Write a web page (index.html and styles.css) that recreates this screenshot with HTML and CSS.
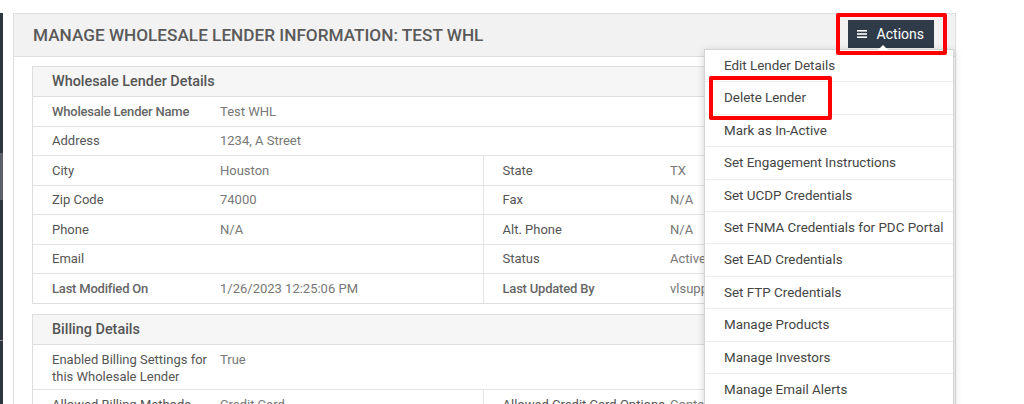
FILE: index.html
```html
<!DOCTYPE html>
<html lang="en">

<head>
    <meta charset="UTF-8">
    <meta name="viewport" content="width=device-width, initial-scale=1.0">
    <title>Manage Wholesale Lender</title>
    <link rel="stylesheet" href="styles.css">
</head>

<body>
    <div class="layout">
        <div class="sidebar">
            <div class="sidebar-active"></div>
            <div class="sidebar-line"></div>
        </div>

        <div class="content">
            <div class="panel">
                <div class="panel-header">
                    <h1 class="panel-title">Manage Wholesale Lender Information: Test WHL</h1>

                    <div class="actions">
                        <span class="highlight highlight-actions"></span>
                        <button class="actions-button">
                            <svg class="menu-icon" width="10" height="8" viewBox="0 0 10 8">
                                <rect x="0" y="0" width="10" height="1.6" fill="#fff" />
                                <rect x="0" y="3.2" width="10" height="1.6" fill="#fff" />
                                <rect x="0" y="6.4" width="10" height="1.6" fill="#fff" />
                            </svg>
                            Actions
                        </button>

                        <ul class="dropdown">
                            <li><a href="#">Edit Lender Details</a></li>
                            <li><a href="#">Delete Lender</a><span class="highlight highlight-item"></span></li>
                            <li><a href="#">Mark as In-Active</a></li>
                            <li><a href="#">Set Engagement Instructions</a></li>
                            <li><a href="#">Set UCDP Credentials</a></li>
                            <li><a href="#">Set FNMA Credentials for PDC Portal</a></li>
                            <li><a href="#">Set EAD Credentials</a></li>
                            <li><a href="#">Set FTP Credentials</a></li>
                            <li><a href="#">Manage Products</a></li>
                            <li><a href="#">Manage Investors</a></li>
                            <li><a href="#">Manage Email Alerts</a></li>
                        </ul>
                    </div>
                </div>

                <div class="panel-body">
                    <div class="section">
                        <div class="section-header">Wholesale Lender Details</div>
                        <table class="detail-table">
                            <colgroup>
                                <col class="col-label">
                                <col class="col-value">
                                <col class="col-label">
                                <col class="col-value-last">
                            </colgroup>
                            <tr>
                                <td class="label strong">Wholesale Lender Name</td>
                                <td class="value" colspan="3">Test WHL</td>
                            </tr>
                            <tr>
                                <td class="label">Address</td>
                                <td class="value" colspan="3">1234, A Street</td>
                            </tr>
                            <tr>
                                <td class="label">City</td>
                                <td class="value">Houston</td>
                                <td class="label split">State</td>
                                <td class="value">TX</td>
                            </tr>
                            <tr>
                                <td class="label">Zip Code</td>
                                <td class="value">74000</td>
                                <td class="label split">Fax</td>
                                <td class="value">N/A</td>
                            </tr>
                            <tr>
                                <td class="label">Phone</td>
                                <td class="value">N/A</td>
                                <td class="label split">Alt. Phone</td>
                                <td class="value">N/A</td>
                            </tr>
                            <tr>
                                <td class="label">Email</td>
                                <td class="value"></td>
                                <td class="label split">Status</td>
                                <td class="value">Active</td>
                            </tr>
                            <tr>
                                <td class="label strong">Last Modified On</td>
                                <td class="value">1/26/2023 12:25:06 PM</td>
                                <td class="label split strong">Last Updated By</td>
                                <td class="value">vlsupport</td>
                            </tr>
                        </table>
                    </div>

                    <div class="section">
                        <div class="section-header">Billing Details</div>
                        <table class="detail-table">
                            <colgroup>
                                <col class="col-label">
                                <col class="col-value">
                                <col class="col-label">
                                <col class="col-value-last">
                            </colgroup>
                            <tr class="tall">
                                <td class="label">Enabled Billing Settings for<br>this Wholesale Lender</td>
                                <td class="value" colspan="3">True</td>
                            </tr>
                            <tr>
                                <td class="label">Allowed Billing Methods</td>
                                <td class="value">Credit Card</td>
                                <td class="label split">Allowed Credit Card Options</td>
                                <td class="value">Contact</td>
                            </tr>
                        </table>
                    </div>
                </div>
            </div>
        </div>
    </div>
</body>

</html>
```

FILE: styles.css
```css
body {
    font-family: Roboto, "Liberation Sans", Arial, sans-serif;
    margin: 0;
    background-color: #fff;
    color: #555;
}

.layout {
    display: flex;
    height: 404px;
    overflow: hidden;
}

.sidebar {
    width: 3px;
    margin-top: 13px;
    background-color: #2e3640;
    display: flex;
    flex-direction: column;
}

.sidebar-active {
    height: 47px;
    margin-top: 140px;
    background-color: #5a6169;
}

.sidebar-line {
    height: 1px;
    margin-top: 140px;
    background-color: #8a9097;
}

.content {
    padding: 13px 0 0 10px;
}

.panel {
    width: 941px;
    border: 1px solid #ddd;
    background-color: #fff;
}

.panel-header {
    display: flex;
    align-items: center;
    justify-content: space-between;
    height: 42px;
    padding: 0 21px 0 19px;
    background-color: #f2f2f2;
    border-bottom: 1px solid #ddd;
    position: relative;
}

.panel-title {
    margin: 0;
    font-size: 17.2px;
    font-weight: 500;
    text-transform: uppercase;
    color: #5a5a5a;
}

.actions {
    position: relative;
    margin-top: -3px;
}

.actions-button {
    display: flex;
    align-items: center;
    gap: 10px;
    height: 28px;
    padding: 0 10px 0 9px;
    border: none;
    background-color: #2f3b49;
    color: #fff;
    font-family: inherit;
    font-size: 14px;
    cursor: pointer;
}

.menu-icon {
    display: block;
}

.highlight {
    position: absolute;
    border: 4px solid #f00;
    border-radius: 2px;
    pointer-events: none;
    z-index: 3;
}

.highlight-actions {
    left: -12px;
    right: -13px;
    top: -7px;
    bottom: -7px;
}

.dropdown {
    position: absolute;
    top: 29.5px;
    right: -20px;
    width: 248px;
    margin: 0;
    padding: 0;
    list-style: none;
    background-color: #fff;
    border: 1px solid #d4d4d4;
    box-shadow: 0 2px 8px rgba(0, 0, 0, 0.18);
    z-index: 2;
}

.dropdown::before {
    content: "";
    position: absolute;
    top: -5px;
    right: 65px;
    border-left: 5px solid transparent;
    border-right: 5px solid transparent;
    border-bottom: 5px solid #fff;
}

.dropdown li {
    position: relative;
    height: 32.4px;
    box-sizing: border-box;
    border-bottom: 1px solid #ededed;
}

.dropdown li:last-child {
    border-bottom: none;
}

.dropdown a {
    display: block;
    padding: 0 19px;
    line-height: 32px;
    font-size: 13.4px;
    color: #444;
    text-decoration: none;
    white-space: nowrap;
}

.highlight-item {
    left: 4px;
    top: -6px;
    width: 123px;
    height: 44px;
    box-sizing: border-box;
}

.panel-body {
    padding: 9px 19px 0 18px;
}

.section {
    border: 1px solid #ddd;
    margin-bottom: 10px;
}

.section-header {
    height: 29px;
    line-height: 29px;
    padding: 0 19px;
    background-color: #f6f6f6;
    border-bottom: 1px solid #ddd;
    font-size: 14.4px;
    font-weight: 500;
    color: #555;
}

.detail-table {
    width: 100%;
    border-collapse: collapse;
    table-layout: fixed;
    font-size: 13px;
}

.col-label {
    width: 179px;
}

.col-value {
    width: 271px;
}

.col-value-last {
    width: auto;
}

.detail-table td {
    height: 28.5px;
    padding: 0 8px;
    border-top: 1px solid #e3e3e3;
    white-space: nowrap;
}

.detail-table tr:first-child td {
    border-top: none;
}

.detail-table td.label {
    padding-left: 19px;
    color: #555;
}

.detail-table td.split {
    padding-left: 19px;
    border-left: 1px solid #e3e3e3;
}

.detail-table td.strong {
    font-weight: 500;
    letter-spacing: -0.2px;
    color: #666;
}

.detail-table td.value {
    color: #777;
}

.detail-table tr.tall td {
    height: 45px;
    line-height: 17px;
    vertical-align: top;
    padding-top: 6px;
    box-sizing: border-box;
}
```
